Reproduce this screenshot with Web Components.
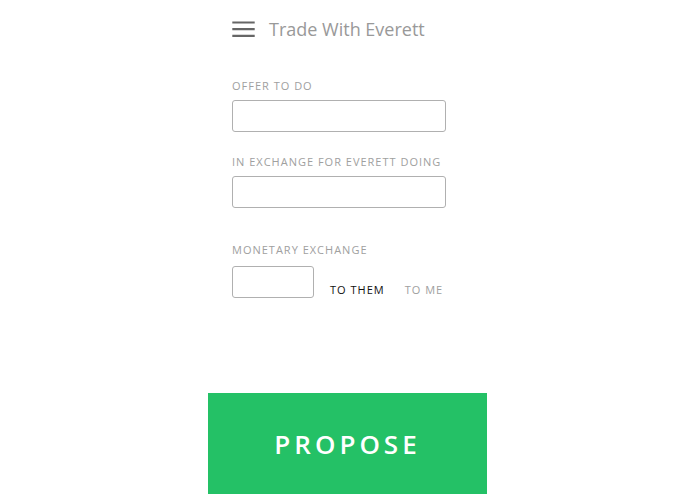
<!DOCTYPE html>
<html lang="en">
<head>
<meta charset="utf-8">
<title>Trade With Everett</title>
<style>
body { margin: 0; background: #fff; font-family: "Open Sans", sans-serif; }
</style>
</head>
<body>
<trade-screen></trade-screen>
<script>
class BaseElement extends HTMLElement {
  connectedCallback() {
    if (this.shadowRoot) return;
    this.attachShadow({ mode: "open" }).innerHTML =
      "<style>*{box-sizing:border-box}</style>" + this.render();
  }
}

customElements.define("app-header", class extends BaseElement {
  render() {
    return `<style>
      :host { display: flex; align-items: center; gap: 14px; color: #999; }
      button { display: flex; padding: 0; border: 0; background: none; }
      h1 { margin: 0; font-size: 18px; line-height: 24px; font-weight: 400; }
    </style>
    <button type="button" aria-label="Menu">
      <svg width="23" height="18" viewBox="0 0 23 18" fill="#666"><path d="M.3 1.4h22.4v2.2H.3zM.3 8.1h22.4v2.2H.3zM.3 14.8h22.4V17H.3z"/></svg>
    </button>
    <h1><slot></slot></h1>`;
  }
});

customElements.define("text-field", class extends BaseElement {
  render() {
    return `<style>
      :host { display: flex; flex-direction: column; gap: 6px; }
      label { color: #a0a0a0; font-size: 11px; line-height: 16px; letter-spacing: 1px; white-space: nowrap; }
      input { width: 100%; height: 32px; padding: 0 8px; border: 1px solid #b0b0b0; border-radius: 3px; background: #fff; font: 14px "Open Sans", sans-serif; }
    </style>
    <label for="f">${this.getAttribute("label")}</label>
    <input id="f" type="text">`;
  }
});

customElements.define("money-field", class extends BaseElement {
  render() {
    return `<style>
      :host { display: flex; flex-direction: column; gap: 8px; color: #a0a0a0; font-size: 11px; line-height: 16px; letter-spacing: 1px; }
      label { white-space: nowrap; }
      .row { display: flex; align-items: flex-end; gap: 16px; }
      input { width: 82px; height: 32px; padding: 0 8px; border: 1px solid #b0b0b0; border-radius: 3px; background: #fff; font: 14px "Open Sans", sans-serif; }
      .choices { display: flex; gap: 20px; }
      button { padding: 0; border: 0; background: none; font: inherit; letter-spacing: inherit; color: inherit; white-space: nowrap; }
      button[aria-pressed="true"] { color: #111; }
    </style>
    <label for="m">MONETARY EXCHANGE</label>
    <div class="row">
      <input id="m" type="text" inputmode="decimal">
      <div class="choices">
        <button type="button" aria-pressed="true">TO THEM</button>
        <button type="button" aria-pressed="false">TO ME</button>
      </div>
    </div>`;
  }
});

customElements.define("propose-button", class extends BaseElement {
  render() {
    return `<style>
      :host { display: flex; }
      button { flex: 1; padding: 32px 0 31px; border: 0; background: #24c166; color: #fff; font: 600 26px/38px "Open Sans", sans-serif; letter-spacing: 4px; }
    </style>
    <button type="submit"><slot></slot></button>`;
  }
});

customElements.define("trade-screen", class extends BaseElement {
  render() {
    return `<style>
      :host { display: flex; flex-direction: column; max-width: 279px; min-height: 100vh; margin: 0 auto; }
      main { flex: 1; display: flex; flex-direction: column; padding: 17px 41px 24px 24px; }
      app-header { margin-bottom: 37px; }
      text-field { margin-bottom: 22px; }
      money-field { margin-top: 12px; }
    </style>
    <main>
      <app-header>Trade With Everett</app-header>
      <text-field label="OFFER TO DO"></text-field>
      <text-field label="IN EXCHANGE FOR EVERETT DOING"></text-field>
      <money-field></money-field>
    </main>
    <propose-button>PROPOSE</propose-button>`;
  }
});
</script>
</body>
</html>
